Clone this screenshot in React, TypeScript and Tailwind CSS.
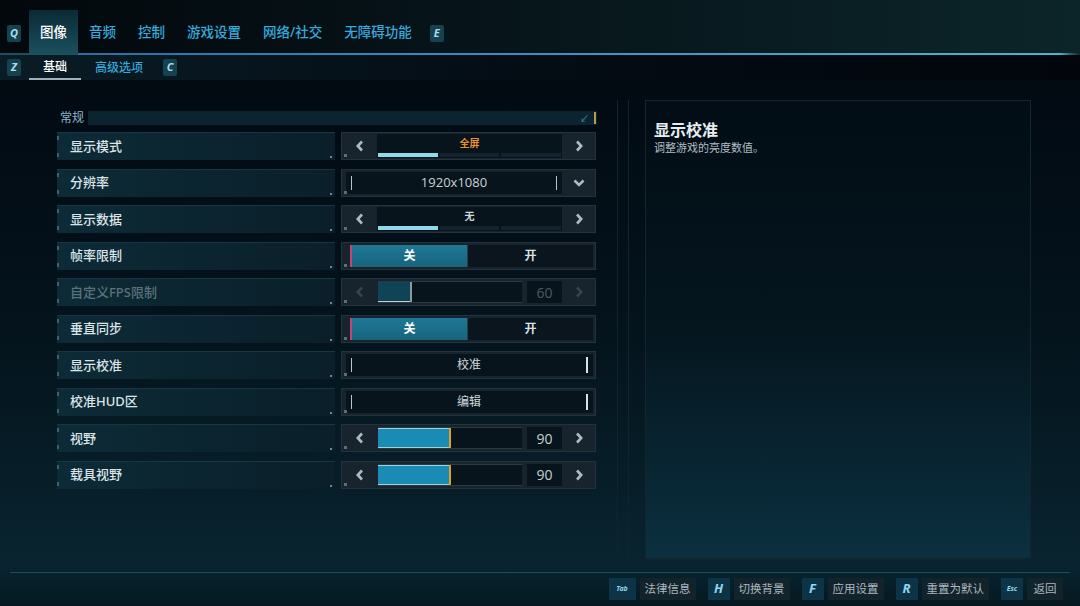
import React from "react";

const FONT = { fontFamily: '"Noto Sans", "Noto Sans CJK SC", sans-serif' };

function Chev({ dir, dim }: { dir: "l" | "r" | "d"; dim?: boolean }) {
  const c = dim ? "#34454e" : "#aabdc6";
  if (dir === "d")
    return (
      <svg width="12" height="10" viewBox="0 0 12 10">
        <path d="M1.5 2.5 L6 7 L10.5 2.5" stroke={c} strokeWidth="2.6" fill="none" />
      </svg>
    );
  return (
    <svg width="10" height="12" viewBox="0 0 10 12">
      <path
        d={dir === "l" ? "M7 1.5 L2.8 6 L7 10.5" : "M3 1.5 L7.2 6 L3 10.5"}
        stroke={c}
        strokeWidth="2.6"
        fill="none"
      />
    </svg>
  );
}

function Key({ k, small }: { k: string; small?: boolean }) {
  return (
    <div className="flex h-[17px] w-[14px] items-center justify-center rounded-[2px] bg-[#16414f]">
      <span className={`${small ? "text-[8px]" : "text-[11px]"} font-bold italic text-[#a8dcf0]`}>{k}</span>
    </div>
  );
}

function Notch() {
  return <div className="absolute bottom-[2px] left-[2px] h-[3px] w-[3px] bg-[#8aa0aa] opacity-60" />;
}

function Frame({ children }: { children: React.ReactNode }) {
  return (
    <div className="relative flex h-[28px] w-[255px] border border-[#23323c] bg-[#17242d]">
      {children}
      <Notch />
    </div>
  );
}

function Selector({ value, orange }: { value: string; orange?: boolean }) {
  return (
    <Frame>
      <div className="flex w-[35px] items-center justify-center">
        <Chev dir="l" />
      </div>
      <div className="my-[1px] flex flex-1 flex-col bg-[#08141c]">
        <div
          className={`flex flex-1 items-center justify-center text-[10px] font-bold ${
            orange ? "text-[#ea8f2a]" : "text-[#d0d8dc]"
          }`}
        >
          {value}
        </div>
        <div className="mb-[1px] flex h-[4px] gap-[2px] px-[1px]">
          <div className="flex-1 bg-[#8fd9ee]" />
          <div className="flex-1 bg-[#13232d]" />
          <div className="flex-1 bg-[#13232d]" />
        </div>
      </div>
      <div className="flex w-[33px] items-center justify-center">
        <Chev dir="r" />
      </div>
    </Frame>
  );
}

function Dropdown({ value }: { value: string }) {
  return (
    <Frame>
      <div className="my-[2px] ml-[4px] flex flex-1 items-center justify-between bg-[#08141c] px-[5px]">
        <div className="h-[14px] w-[1px] bg-[#b8c6cc]" />
        <span className="text-[13px] text-[#c8d1d5]" style={{ fontFamily: '"Open Sans", "Noto Sans", sans-serif' }}>
          {value}
        </span>
        <div className="h-[14px] w-[1px] bg-[#b8c6cc]" />
      </div>
      <div className="flex w-[33px] items-center justify-center">
        <Chev dir="d" />
      </div>
    </Frame>
  );
}

function Toggle() {
  return (
    <Frame>
      <div className="my-[2px] ml-[8px] mr-[2px] flex flex-1 bg-[#0a151e]">
        <div className="flex w-[117px] items-center justify-center border-l-2 border-[#c2457a] bg-gradient-to-b from-[#1f7896] to-[#17637c] text-[12px] font-bold text-white">
          关
        </div>
        <div className="w-[1px] bg-[#24404c]" />
        <div className="flex flex-1 items-center justify-center text-[12px] font-bold text-[#d8e0e3]">开</div>
      </div>
    </Frame>
  );
}

function ButtonCtl({ value }: { value: string }) {
  return (
    <Frame>
      <div className="my-[2px] ml-[4px] mr-[2px] flex flex-1 items-center justify-between bg-[#08141c] px-[5px]">
        <div className="h-[14px] w-[1px] bg-[#b8c6cc]" />
        <span className="text-[12px] text-[#d0d8dc]">{value}</span>
        <div className="h-[16px] w-[2px] bg-[#d8e2e6]" />
      </div>
    </Frame>
  );
}

function Slider({ value, pct, disabled }: { value: string; pct: number; disabled?: boolean }) {
  return (
    <Frame>
      <div className="flex w-[36px] items-center justify-center">
        <Chev dir="l" dim={disabled} />
      </div>
      <div className="my-[2px] flex w-[144px] border-y border-[#2a3942] bg-[#08141c]">
        <div
          className={`relative h-full border-y ${
            disabled ? "border-y-transparent bg-[#0f4456]" : "border-y-[#9ad4e4] bg-[#1a8bb3]"
          }`}
          style={{ width: `${pct}%` }}
        >
          {disabled && <div className="absolute bottom-[-1px] left-0 right-0 h-[1px] bg-[#c0ccd2]" />}
        </div>
        <div className={`h-full w-[2px] ${disabled ? "bg-[#8a9aa2]" : "bg-[#e0a020]"}`} />
      </div>
      <div className="my-[2px] ml-[5px] flex w-[35px] items-center justify-center bg-[#08141c]">
        <span className={`text-[14px] ${disabled ? "text-[#4a5a62]" : "text-[#c4d0d5]"}`} style={{ fontFamily: '"Open Sans", sans-serif' }}>
          {value}
        </span>
      </div>
      <div className="flex flex-1 items-center justify-center">
        <Chev dir="r" dim={disabled} />
      </div>
    </Frame>
  );
}

function Label({ text, disabled }: { text: string; disabled?: boolean }) {
  return (
    <div className="relative flex h-[28px] w-[278px] items-center border-t border-[#163643] bg-gradient-to-r from-[#0c2b37] to-[#0a1f29] pl-[13px]">
      <div className="absolute left-0 top-[3px] h-[4px] w-[2px] bg-[#3d6170]" />
      <div className="absolute bottom-[3px] left-0 h-[4px] w-[2px] bg-[#3d6170]" />
      <div className="absolute bottom-[2px] right-[3px] h-[2px] w-[2px] bg-[#6d8894]" />
      <span className={`text-[13px] font-medium ${disabled ? "text-[#5d717a]" : "text-[#dde4e7]"}`}>{text}</span>
    </div>
  );
}

const rows: { label: string; ctl: React.ReactNode; disabled?: boolean }[] = [
  { label: "显示模式", ctl: <Selector value="全屏" orange /> },
  { label: "分辨率", ctl: <Dropdown value="1920x1080" /> },
  { label: "显示数据", ctl: <Selector value="无" /> },
  { label: "帧率限制", ctl: <Toggle /> },
  { label: "自定义FPS限制", ctl: <Slider value="60" pct={22} disabled />, disabled: true },
  { label: "垂直同步", ctl: <Toggle /> },
  { label: "显示校准", ctl: <ButtonCtl value="校准" /> },
  { label: "校准HUD区", ctl: <ButtonCtl value="编辑" /> },
  { label: "视野", ctl: <Slider value="90" pct={49} /> },
  { label: "载具视野", ctl: <Slider value="90" pct={49} /> },
];

const footer = [
  { k: "Tab", t: "法律信息", small: true, w: "w-[27px]" },
  { k: "H", t: "切换背景" },
  { k: "F", t: "应用设置" },
  { k: "R", t: "重置为默认" },
  { k: "Esc", t: "返回", small: true },
];

export default function App() {
  const tabs = ["音频", "控制", "游戏设置", "网络/社交", "无障碍功能"];
  return (
    <div className="flex h-[606px] w-[1080px] flex-col overflow-hidden bg-[#030b12]" style={FONT}>
      {/* Top tabs */}
      <div className="flex h-[53px] items-end bg-gradient-to-r from-[#03080c] via-[#07161b] to-[#0c2529]">
        <div className="mb-[11px] ml-[7px] mr-[8px]">
          <Key k="Q" />
        </div>
        <div className="flex h-[43px] items-center bg-gradient-to-b from-[#0a2a34] to-[#1b4f5e] px-[11px] pt-[2px]">
          <span className="text-[13.5px] font-medium text-white">图像</span>
        </div>
        {tabs.map((t) => (
          <div key={t} className="flex h-[43px] items-center px-[11px] pt-[2px]">
            <span className="text-[13.5px] font-medium text-[#36a9dd]">{t}</span>
          </div>
        ))}
        <div className="mb-[11px] ml-[7px]">
          <Key k="E" />
        </div>
      </div>
      <div className="flex h-[2px]">
        <div className="w-[78px] bg-[#1b4f5e]" />
        <div className="flex-1 bg-gradient-to-r from-[#2c6ea8] via-[#3f90c6] to-[#4cb4cf]" />
        <div className="w-[20px] bg-gradient-to-r from-[#4cb4cf] to-[#0c2529]" />
      </div>
      {/* Sub tabs */}
      <div className="flex h-[25px] items-center bg-gradient-to-r from-[#0a1c25] via-[#040c14] to-[#02060c]">
        <div className="ml-[7px] mr-[8px]">
          <Key k="Z" />
        </div>
        <div className="flex h-full w-[52px] flex-col items-center justify-center border-b-2 border-[#9fb0b8]">
          <span className="text-[12px] font-medium text-white">基础</span>
        </div>
        <div className="flex h-full items-center px-[14px]">
          <span className="text-[12px] font-medium text-[#36a9dd]">高级选项</span>
        </div>
        <div className="ml-[6px]">
          <Key k="C" />
        </div>
      </div>
      {/* Main */}
      <div className="flex flex-1 bg-gradient-to-b from-[#020a12] via-[#04131c] to-[#092430] pt-[20px]">
        <div className="ml-[57px] mt-[11px] flex w-[540px] flex-col">
          <div className="flex h-[14px] items-center">
            <span className="w-[31px] pl-[3px] text-[12px] leading-none text-[#8cb6cc]">常规</span>
            <div className="relative flex h-full flex-1 items-center justify-end bg-[#0a2530] pr-[1px]">
              <span className="mr-[5px] text-[9px] leading-none text-[#4f8cb0]">↙</span>
              <div className="h-[12px] w-[2px] bg-[#b79a50]" />
            </div>
          </div>
          <div className="mt-[7px] flex flex-col gap-[8.5px]">
            {rows.map((r) => (
              <div key={r.label} className="flex gap-[6px]">
                <Label text={r.label} disabled={r.disabled} />
                {r.ctl}
              </div>
            ))}
          </div>
        </div>
        <div className="ml-[20px] flex h-[460px] w-[28px] gap-[10px]">
          <div className="h-full w-[1px] bg-[#0d2531]" />
          <div className="h-full w-[1px] bg-[#0d2531]" />
        </div>
        <div className="flex h-[459px] w-[386px] flex-col border border-[#13252f] bg-gradient-to-b from-[#020d15] via-[#05161f] to-[#0b3040] px-[8px] pt-[19px]">
          <span className="text-[16px] font-bold leading-[20px] text-[#e8eef0]">显示校准</span>
          <span className="mt-[1px] text-[11px] leading-[14px] text-[#b2bec4]">调整游戏的亮度数值。</span>
        </div>
      </div>
      {/* Footer */}
      <div className="flex h-[38px] flex-col bg-gradient-to-b from-[#082430] to-[#051820]">
        <div className="mx-[10px] mt-[4px] h-[1px] bg-[#1d4d5a]" />
        <div className="mt-[5px] flex items-center justify-end gap-[12px] pr-[17px]">
          {footer.map((f) => (
            <div key={f.k} className="flex h-[22px] gap-[4px]">
              <div className={`flex ${f.w ?? "w-[22px]"} items-center justify-center bg-[#0d3446]`}>
                <span className={`${f.small ? "text-[7px]" : "text-[13px]"} font-bold italic text-[#8fd6f2]`}>{f.k}</span>
              </div>
              <div className="flex min-w-[36px] items-center justify-center bg-[#13232c] px-[5px]">
                <span className="text-[11.5px] text-[#a9b8bf]">{f.t}</span>
              </div>
            </div>
          ))}
        </div>
      </div>
    </div>
  );
}
